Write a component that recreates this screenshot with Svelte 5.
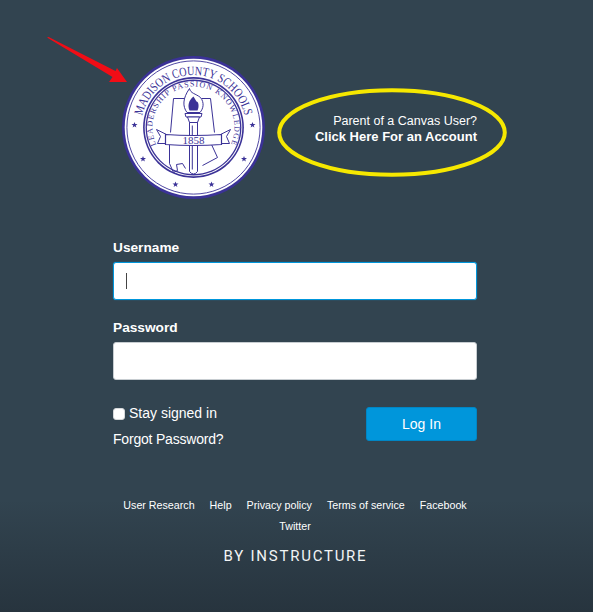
<script>
  const footerLinks = ["User Research", "Help", "Privacy policy", "Terms of service", "Facebook", "Twitter"]
  const stars = [
    [-59, -2.5], [59, -2.5], [-50.5, 31.5], [50.5, 31.5], [-18, 57], [18, 57]
  ]
</script>

<div class="page">
  <svg class="arrow" width="90" height="50" viewBox="0 0 90 50" aria-hidden="true">
    <path d="M0 .4 L1.6 0 L68.5 34 L70 31 L80 45 L62 45 L65.5 40 Z" fill="#f10d16" />
  </svg>

  <header class="brand">
    <svg class="seal" width="143" height="143" viewBox="-71.5 -71.5 143 143" role="img" aria-label="Madison County Schools seal">
      <defs>
        <path id="outerArc" d="M -51 13 A 52.6 52.6 0 1 1 51 13" />
        <path id="innerArc" d="M -28 30 A 41 41 0 1 1 28 30" />
      </defs>
      <circle r="71.5" fill="#3b3297" />
      <circle r="68.8" fill="#fff" />
      <circle r="66.6" fill="none" stroke="#3b3297" stroke-width="0.9" />
      <circle r="50.4" fill="#3b3297" />
      <circle r="48.8" fill="#fff" />
      <circle r="47.9" fill="#3b3297" />
      <circle r="46.6" fill="#fff" />
      <text class="arc-outer" textLength="141" lengthAdjust="spacingAndGlyphs"><textPath href="#outerArc" startOffset="50%" text-anchor="middle">MADISON COUNTY SCHOOLS</textPath></text>
      <text class="arc-inner"><textPath href="#innerArc" startOffset="50%" text-anchor="middle">LEADERSHIP PASSION KNOWLEDGE</textPath></text>
      {#each stars as [x, y]}
        <path transform="translate({x} {y})" d="M0 -3 L.8 -.9 L3 -.9 L1.2 .4 L1.9 2.6 L0 1.3 L-1.9 2.6 L-1.2 .4 L-3 -.9 L-.8 -.9 Z" fill="#3b3297" />
      {/each}
      <!-- state outline -->
      <path d="M-8 -29 L-20 -29 L-23 5 M8 -29 L17 -29 L21 5 M-24 17 L-24 36 L-20 45 L-16 43 L-17 37 L-11 36 L-8 41 M13 17 L18 17 L24 30 L9 38" fill="none" stroke="#3b3297" stroke-width="1" />
      <!-- torch -->
      <g fill="#fff" stroke="#3b3297" stroke-width="1">
        <path d="M-4 -6 L4 -6 L4 44 Q0 49 -4 44 Z" />
        <path d="M-8.5 -14 L8.5 -14 L7.5 -10.5 L-7.5 -10.5 Z" />
        <path d="M-6 -10.5 L6 -10.5 L4 -5 L-4 -5 Z" />
        <path d="M-6.5 -15 C-11 -21 -11 -29 -4 -39 C-3 -34 2 -34 7 -30 C11 -25 10 -19 6.5 -15 Z" />
      </g>
      <path d="M0 -31 C-5 -27 -6 -22 -4 -17 L4 -17 C6 -21 5 -26 3 -26 C2 -28 1 -29 0 -31 Z" fill="#3b3297" />
      <line x1="-1.2" y1="-2" x2="-1.2" y2="42" stroke="#3b3297" stroke-width="1" />
      <!-- ribbon -->
      <path d="M-27 7 L-37 2 L-33 9 L-36 16 L-27 16 M27 7 L37 2 L33 9 L36 16 L27 16" fill="#fff" stroke="#3b3297" stroke-width="1" />
      <path d="M-28 7 Q0 9 28 7 L28 17 Q0 19 -28 17 Z" fill="#fff" stroke="#3b3297" stroke-width="1.2" />
      <text class="year" x="0" y="16.5" text-anchor="middle">1858</text>
    </svg>

    <div class="parent">
      <svg class="ring" width="230" height="89" viewBox="0 0 230 89" aria-hidden="true">
        <ellipse cx="115" cy="44.5" rx="112.8" ry="42.3" fill="none" stroke="#f6e800" stroke-width="4" />
      </svg>
      <p>Parent of a Canvas User?<br /><strong>Click Here For an Account</strong></p>
    </div>
  </header>

  <form class="login" on:submit|preventDefault>
    <label class="field">
      <span>Username</span>
      <div class="input focused"><i class="caret"></i></div>
    </label>
    <label class="field">
      <span>Password</span>
      <div class="input"></div>
    </label>

    <div class="actions">
      <div class="left">
        <label class="stay"><input type="checkbox" /> <span>Stay signed in</span></label>
        <a href="#forgot">Forgot Password?</a>
      </div>
      <button type="submit">Log In</button>
    </div>
  </form>

  <footer>
    <nav>
      {#each footerLinks as link}
        <a href="#{link}">{link}</a>
      {/each}
    </nav>
    <div class="by">BY INSTRUCTURE</div>
  </footer>
</div>

<style>
  :global(body) {
    margin: 0;
    background: #324450;
  }
  .page {
    position: relative;
    width: 593px;
    height: 612px;
    overflow: hidden;
    padding-top: 56px;
    box-sizing: border-box;
    background: linear-gradient(to bottom, #324450 0, #324450 500px, #27343e 612px);
    color: #fff;
    font-family: "Liberation Sans", Arial, sans-serif;
  }
  .arrow {
    position: absolute;
    left: 47px;
    top: 37px;
  }
  .brand {
    display: flex;
    align-items: flex-start;
    padding-left: 122px;
    gap: 12px;
  }
  .seal {
    flex: none;
    display: block;
  }
  .arc-outer {
    font-family: "Liberation Serif", serif;
    font-size: 12.6px;
    fill: #3b3297;
  }
  .arc-inner {
    font-family: "Liberation Serif", serif;
    font-size: 8px;
    fill: #3b3297;
    letter-spacing: 1px;
  }
  .year {
    font-family: "Liberation Serif", serif;
    font-size: 11px;
    fill: #3b3297;
  }
  .parent {
    position: relative;
    flex: none;
    width: 230px;
    height: 89px;
    margin-top: 32px;
    display: flex;
    align-items: center;
    justify-content: flex-end;
    padding-right: 30px;
    box-sizing: border-box;
  }
  .ring {
    position: absolute;
    left: 0;
    top: 0;
  }
  .parent p {
    margin: 0 0 8px;
    text-align: right;
    font-size: 12.5px;
    line-height: 16px;
  }
  .parent strong {
    font-size: 13px;
  }
  .login {
    margin: 40px 0 0 113px;
    width: 364px;
  }
  .field {
    display: block;
    margin-bottom: 19px;
  }
  .field span {
    display: block;
    font-size: 13.7px;
    font-weight: 700;
    line-height: 17px;
    margin-bottom: 6px;
  }
  .input {
    height: 38px;
    box-sizing: border-box;
    background: #fff;
    border: 1px solid #c7cdd1;
    border-radius: 3px;
    display: flex;
    align-items: center;
    padding-left: 12px;
  }
  .input.focused {
    border-color: #0096db;
    box-shadow: 0 0 1px #0096db;
  }
  .caret {
    width: 1px;
    height: 16px;
    background: #444;
  }
  .actions {
    display: flex;
    justify-content: space-between;
    margin-top: 25px;
  }
  .left {
    display: flex;
    flex-direction: column;
    gap: 9px;
    font-size: 14px;
    line-height: 17px;
  }
  .stay {
    display: flex;
    align-items: center;
    gap: 4px;
  }
  .stay input {
    appearance: none;
    margin: 0;
    width: 12px;
    height: 12px;
    background: #fff;
    border: 1px solid #d5d8da;
    border-radius: 3px;
  }
  .left a {
    color: #fff;
    text-decoration: none;
    letter-spacing: -0.2px;
  }
  button {
    width: 111px;
    height: 34px;
    margin-top: 2px;
    background: #0096db;
    border: 1px solid #0086c5;
    border-radius: 3px;
    color: #fff;
    font: 14px "Liberation Sans", Arial, sans-serif;
  }
  footer {
    margin-top: 51px;
    text-align: center;
  }
  nav {
    display: flex;
    flex-wrap: wrap;
    justify-content: center;
    column-gap: 15px;
    row-gap: 8px;
    width: 364px;
    margin-left: 113px;
    font-size: 10.7px;
    line-height: 13px;
  }
  nav a {
    color: #fff;
    text-decoration: none;
  }
  .by {
    margin-top: 15px;
    padding-right: 2px;
    font-family: Roboto, sans-serif;
    font-size: 15px;
    line-height: 17px;
    letter-spacing: 1.75px;
    color: #f2f4f5;
  }
</style>
